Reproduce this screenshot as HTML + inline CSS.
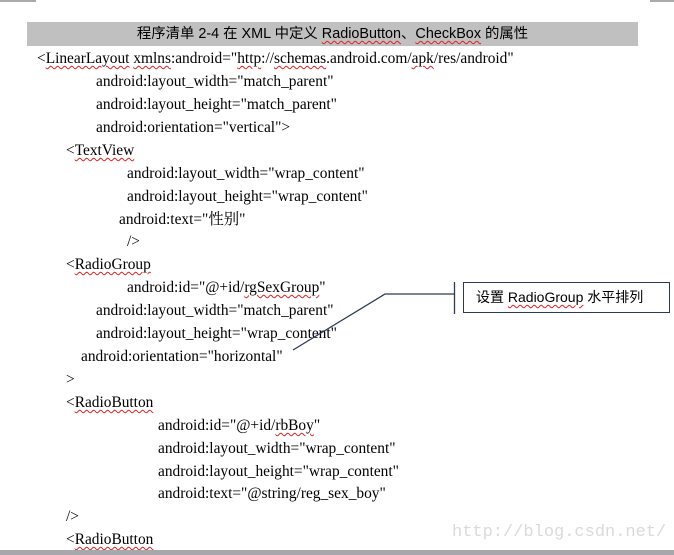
<!DOCTYPE html>
<html><head><meta charset="utf-8"><style>
html,body{margin:0;padding:0;background:#fff;width:674px;height:555px;overflow:hidden;position:relative}
.l{position:absolute;font-family:"Liberation Serif","Noto Serif CJK SC",serif;font-size:15.4px;color:#000;white-space:nowrap;line-height:18px;margin-top:2px}
.w{text-decoration:underline wavy #e02020;text-decoration-thickness:1px;text-underline-offset:2px}
.hd{position:absolute;left:27px;top:22px;width:611px;height:24px;background:#c0c0c0;font-family:"Liberation Sans","Noto Sans CJK SC",sans-serif;font-size:14.4px;text-align:center;line-height:24px}
.box{position:absolute;left:463px;top:282px;width:207px;height:31px;border:1px solid #2b3a55;box-sizing:border-box;font-family:"Liberation Sans","Noto Sans CJK SC",sans-serif;font-size:14px;line-height:29px;padding-left:12px}
.wm{position:absolute;left:452px;top:523px;font-family:"Liberation Mono","DejaVu Sans Mono",monospace;font-size:17px;color:#dadada}
</style></head><body>
<div style="position:absolute;left:0;top:0;width:36px;height:2px;background:#aaa"></div>
<div style="position:absolute;left:650px;top:0;width:24px;height:2px;background:#aaa"></div>
<div class="hd">程序清单 2-4 在 XML 中定义 <span class="w">RadioButton</span>、<span class="w">CheckBox</span> 的属性</div>
<div class="l" style="left:37px;top:48px">&lt;<span class="w">LinearLayout</span> <span class="w">xmlns</span>:android="<span class="w">http</span>://<span class="w">schemas</span>.android.com/<span class="w">apk</span>/res/android"</div>
<div class="l" style="left:96px;top:71px">android:layout_width="match_parent"</div>
<div class="l" style="left:96px;top:94px">android:layout_height="match_parent"</div>
<div class="l" style="left:96px;top:117px">android:orientation="vertical"&gt;</div>
<div class="l" style="left:66px;top:140px">&lt;<span class="w">TextView</span></div>
<div class="l" style="left:127px;top:163px">android:layout_width="wrap_content"</div>
<div class="l" style="left:127px;top:186px">android:layout_height="wrap_content"</div>
<div class="l" style="left:119px;top:209px">android:text="性别"</div>
<div class="l" style="left:127px;top:231px">/&gt;</div>
<div class="l" style="left:66px;top:254px">&lt;<span class="w">RadioGroup</span></div>
<div class="l" style="left:127px;top:277px">android:id="@+id/<span class="w">rgSexGroup</span>"</div>
<div class="l" style="left:96px;top:300px">android:layout_width="match_parent"</div>
<div class="l" style="left:96px;top:323px">android:layout_height="wrap_content"</div>
<div class="l" style="left:81px;top:346px">android:orientation="horizontal"</div>
<div class="l" style="left:66px;top:369px">&gt;</div>
<div class="l" style="left:66px;top:392px">&lt;<span class="w">RadioButton</span></div>
<div class="l" style="left:158px;top:415px">android:id="@+id/<span class="w">rbBoy</span>"</div>
<div class="l" style="left:158px;top:438px">android:layout_width="wrap_content"</div>
<div class="l" style="left:158px;top:461px">android:layout_height="wrap_content"</div>
<div class="l" style="left:158px;top:483px">android:text="@string/reg_sex_boy"</div>
<div class="l" style="left:66px;top:506px">/&gt;</div>
<div class="l" style="left:66px;top:529px">&lt;<span class="w">RadioButton</span></div>
<svg style="position:absolute;left:0;top:0" width="674" height="555">
<polyline points="293,350 385,294 454,294" fill="none" stroke="#2b3a55" stroke-width="1.3"/>
<line x1="454.5" y1="282" x2="454.5" y2="314" stroke="#2b3a55" stroke-width="1.3"/>
</svg>
<div class="box">设置 <span class="w">RadioGroup</span> 水平排列</div>
<div class="wm">http://blog.csdn.net/</div>
<div style="position:absolute;left:0;top:550px;width:674px;height:5px;background:#a8a8ac"></div>
</body></html>
